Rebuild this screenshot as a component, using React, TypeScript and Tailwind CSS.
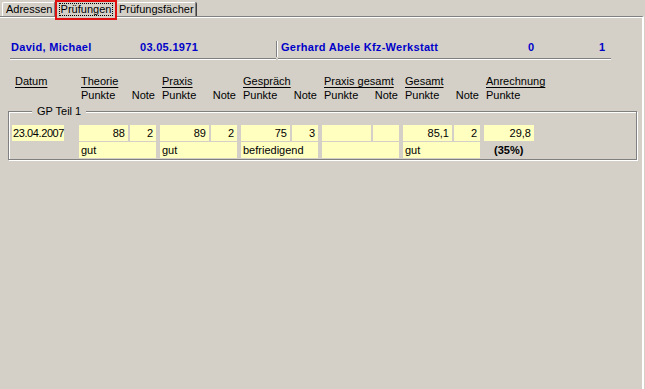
import React from "react";

const Y = "bg-[#ffffc0]";

function Group({ p, n, t, hide }: { p: string; n: string; t: string; hide?: boolean }) {
  return (
    <div className="flex flex-col gap-[1px] w-[77px]">
      <div className="flex gap-[2px] h-[16px]">
        <div className={`w-[49px] ${Y} text-right pr-[3px] leading-[16px]`}>{p}</div>
        <div className={`w-[26px] ${Y} text-right pr-[3px] leading-[16px]`}>{n}</div>
      </div>
      <div className={`h-[16px] ${hide ? "" : Y} pl-[2px] leading-[16px]`}>{t}</div>
    </div>
  );
}

function Head({ title }: { title: string }) {
  return (
    <div className="w-[77px] flex flex-col">
      <div className="pl-[2px] leading-[13px] h-[13px]">
        <span className="underline underline-offset-[2px]">{title}</span>
      </div>
      <div className="flex justify-between leading-[13px] h-[13px] pl-[2px] pr-[1px] mt-[1px]">
        <span>Punkte</span>
        <span>Note</span>
      </div>
    </div>
  );
}

export default function App() {
  return (
    <div
      className="w-[645px] h-[389px] bg-[#d4d0c8] text-black text-[11px] overflow-hidden flex flex-col"
      style={{ fontFamily: '"Liberation Sans", Arial, sans-serif' }}
    >
      {/* Tabs */}
      <div className="h-[16px] flex items-end pl-[2px] relative z-10">
        <div className="h-[14px] w-[53px] border-l border-t border-white border-r border-r-[#808080] rounded-t-[2px] pl-[3px] leading-[13px] shadow-[1px_0_0_#404040]">
          Adressen
        </div>
        <div className="h-[20px] w-[62px] -mb-[4px] border-2 border-[#e01010] bg-[#d4d0c8] flex items-start justify-center pt-[1px]">
          <span className="border border-dotted border-black px-[1px] leading-[11px] h-[13px] overflow-hidden">Prüfungen</span>
        </div>
        <div className="h-[14px] w-[79px] border-t border-white border-r border-r-[#808080] shadow-[1px_0_0_#404040] rounded-t-[2px] pl-[2px] leading-[13px]">
          Prüfungsfächer
        </div>
      </div>

      {/* Panel */}
      <div className="flex-1 border-t border-[#808080] shadow-[inset_0_1px_0_#ffffff] border-r-2 border-r-[#ffffff] mr-[1px] flex flex-col">
        {/* Name row */}
        <div className="mt-[24px] flex pl-[10px] text-[#0000c8] font-bold tracking-[0.3px]">
          <div className="w-[266px] h-[18px] border-b border-[#808080] shadow-[0_1px_0_#ffffff] flex pl-[1px]">
            <span className="w-[129px] leading-[13px]">David, Michael</span>
            <span className="leading-[13px]">03.05.1971</span>
          </div>
          <div className="w-[2px] h-[16px] border-l border-[#808080] border-r border-r-white" />
          <div className="w-[333px] h-[18px] border-b border-[#808080] shadow-[0_1px_0_#ffffff] flex pl-[3px]">
            <span className="w-[247px] leading-[13px]">Gerhard Abele Kfz-Werkstatt</span>
            <span className="w-[71px] leading-[13px]">0</span>
            <span className="leading-[13px]">1</span>
          </div>
        </div>

        {/* Column headers */}
        <div className="mt-[16px] flex pl-[12px]">
          <div className="w-[52px] pl-[3px] leading-[13px]">
            <span className="underline underline-offset-[2px]">Datum</span>
          </div>
          <div className="flex gap-[4px] ml-[15px]">
            <Head title="Theorie" />
            <Head title="Praxis" />
            <Head title="Gespräch" />
            <Head title="Praxis gesamt" />
            <Head title="Gesamt" />
            <div className="w-[50px] flex flex-col">
              <div className="pl-[2px] leading-[13px] h-[13px]">
                <span className="underline underline-offset-[2px]">Anrechnung</span>
              </div>
              <div className="pl-[2px] leading-[13px] h-[13px] mt-[1px]">Punkte</div>
            </div>
          </div>
        </div>

        {/* Group box */}
        <fieldset className="mt-[3px] ml-[8px] w-[629px] border border-[#808080] shadow-[1px_1px_0_#ffffff,inset_1px_1px_0_#ffffff] pt-[7px] pb-[1px] pl-[3px]">
          <legend className="ml-[20px] px-[5px] leading-[13px] bg-[#d4d0c8]">GP Teil 1</legend>
          <div className="flex">
            <div className="w-[52px] flex flex-col gap-[1px]">
              <div className={`h-[16px] ${Y} pl-[1px] leading-[16px] tracking-[-0.4px]`}>23.04.2007</div>
            </div>
            <div className="flex gap-[4px] ml-[15px]">
              <Group p="88" n="2" t="gut" />
              <Group p="89" n="2" t="gut" />
              <Group p="75" n="3" t="befriedigend" />
              <Group p="" n="" t="" />
              <Group p="85,1" n="2" t="gut" />
              <div className="w-[50px] flex flex-col gap-[1px]">
                <div className={`h-[16px] ${Y} text-right pr-[3px] leading-[16px]`}>29,8</div>
                <div className="h-[16px] leading-[16px] font-bold pl-[10px]">(35%)</div>
              </div>
            </div>
          </div>
        </fieldset>
      </div>
    </div>
  );
}
